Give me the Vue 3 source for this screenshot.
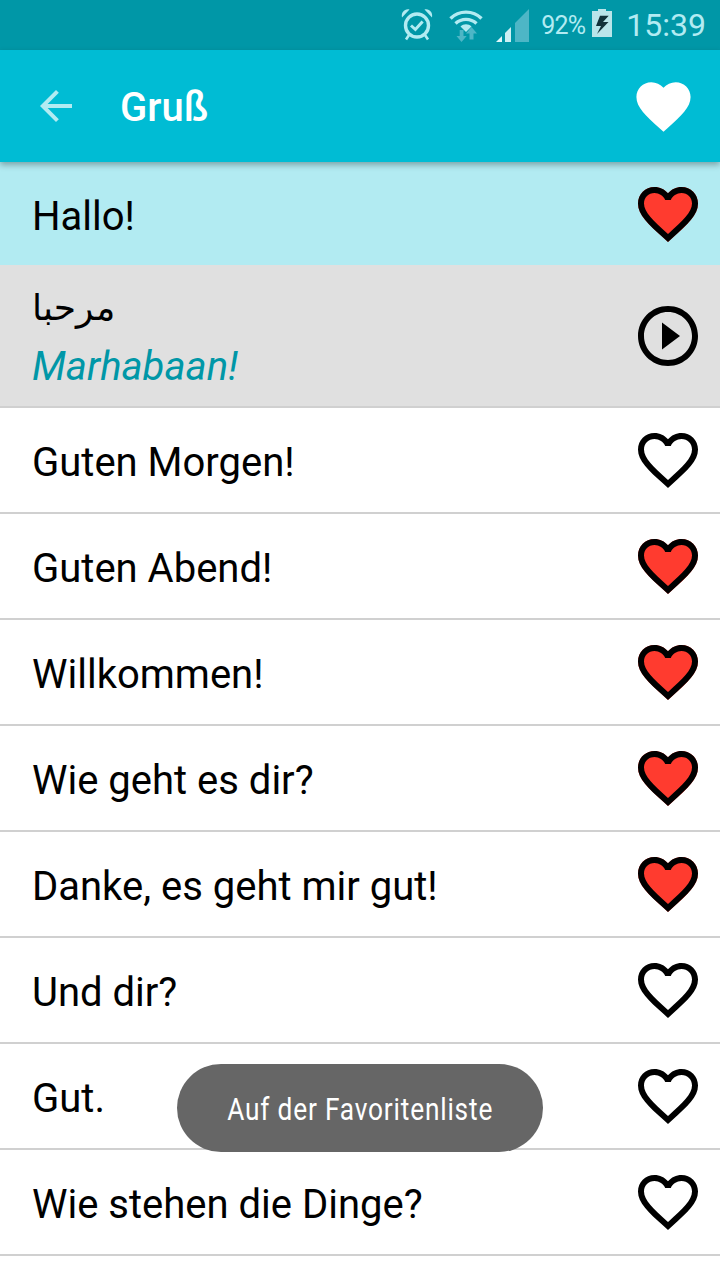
<template>
  <div class="screen">
    <div class="status-bar">
      <!-- alarm -->
      <svg class="st-alarm" width="32" height="34" viewBox="0 0 32 34">
        <circle cx="16" cy="17.500" r="11.500" fill="none" stroke="#b2ebf2" stroke-width="3.4" />
        <path d="M10 17.500l4.400 4 7.200-8" fill="none" stroke="#b2ebf2" stroke-width="3" />
        <path d="M1 9.500C0 4.500 3.500 .5 8.500 1.500z M31 9.500C32 4.500 28.500 .5 23.500 1.500z" fill="#b2ebf2" />
        <path d="M8 27l-3 4.500M24 27l3 4.500" stroke="#b2ebf2" stroke-width="2.6" />
      </svg>
      <!-- wifi -->
      <svg class="st-wifi" width="34" height="34" viewBox="0 0 34 34">
        <path d="M1.5 10.500C10 2 24 2 32.500 10.500" fill="none" stroke="#b2ebf2" stroke-width="3.4" />
        <path d="M6.500 15.500C12.500 10 21.500 10 27.500 15.500" fill="none" stroke="#b2ebf2" stroke-width="3.4" />
        <path d="M17 24l-5.500-5.500C14.500 15.500 19.500 15.500 22.500 18.500z" fill="#b2ebf2" />
        <path d="M12.500 34l-5-6h3.200v-6h3.800v6h3.200z" fill="#4db6c6" />
        <path d="M22.500 19l-5.500 6.500h3.500v6h4v-6h3.500z" fill="#4db6c6" />
      </svg>
      <!-- signal -->
      <svg class="st-signal" width="33" height="33" viewBox="0 0 33 33">
        <path d="M0 33L6 27V33z" fill="#e0f7fa" />
        <path d="M9 24L15 18V33H9z" fill="#cdeff4" />
        <path d="M19 14L33 0V33H19z" fill="#4db6c6" />
      </svg>
      <span class="st-percent">92%</span>
      <!-- battery -->
      <svg class="st-battery" width="20" height="28" viewBox="0 0 20 28">
        <path d="M6 0h8v2h6v26H0V2h6z" fill="#b9e5ea" />
        <path d="M8 6.700H16.700L11 13H16.500L5 25L9 17H4z" fill="#12323a" />
      </svg>
      <span class="st-time">15:39</span>
    </div>

    <header class="app-bar">
      <svg class="back" width="48" height="48" viewBox="0 0 24 24">
        <path d="M20 11H7.830l5.590-5.590L12 4l-8 8 8 8 1.410-1.410L7.830 13H20v-2z" />
      </svg>
      <h1 class="title">Gruß</h1>
      <svg class="fav" width="65" height="65" viewBox="0 0 24 24">
        <path :d="heartPath" />
      </svg>
    </header>

    <ul class="list">
      <li
        v-for="item in items"
        :key="item.text"
        class="row"
        :class="item.kind"
      >
        <div class="texts">
          <div class="text" :class="{ arabic: item.translit }">{{ item.text }}</div>
          <div v-if="item.translit" class="translit">{{ item.translit }}</div>
        </div>
        <svg class="icon" width="72" height="72" viewBox="0 0 24 24">
          <path v-if="item.translit" :d="playPath" />
          <template v-else>
            <path v-if="item.fav" :d="heartPath" fill="#ff3b2f" />
            <path :d="heartOutline" />
          </template>
        </svg>
      </li>
    </ul>

    <div class="toast">
      <span>Auf der Favoritenliste</span>
    </div>
  </div>
</template>

<script setup>
const heartPath =
  'M12 21.35l-1.45-1.32C5.4 15.36 2 12.28 2 8.5 2 5.42 4.42 3 7.5 3c1.74 0 3.34.81 4.5 2.09C13.16 3.81 14.76 3 16.5 3 19.58 3 22 5.42 22 8.5c0 3.78-3.4 6.86-8.55 11.54L12 21.35z'
const heartOutline =
  'M16.5 3c-1.74 0-3.41.81-4.5 2.09C10.91 3.81 9.24 3 7.5 3 4.42 3 2 5.42 2 8.5c0 3.78 3.4 6.86 8.55 11.54L12 21.35l1.45-1.32C18.6 15.36 22 12.28 22 8.5 22 5.42 19.58 3 16.5 3zm-4.4 15.55l-.1.1-.1-.1C7.14 14.24 4 11.39 4 8.5 4 6.5 5.5 5 7.5 5c1.54 0 3.04.99 3.57 2.36h1.87C13.46 5.99 14.96 5 16.5 5c2 0 3.5 1.5 3.5 3.5 0 2.89-3.14 5.74-7.9 10.05z'
const playPath =
  'M10 16.5l6-4.5-6-4.5v9zM12 2C6.48 2 2 6.48 2 12s4.48 10 10 10 10-4.48 10-10S17.52 2 12 2zm0 18c-4.41 0-8-3.59-8-8s3.59-8 8-8 8 3.59 8 8-3.59 8-8 8z'

const items = [
  { text: 'Hallo!', fav: true, kind: 'selected' },
  { text: 'مرحبا', translit: 'Marhabaan!', kind: 'expanded' },
  { text: 'Guten Morgen!', fav: false },
  { text: 'Guten Abend!', fav: true },
  { text: 'Willkommen!', fav: true },
  { text: 'Wie geht es dir?', fav: true },
  { text: 'Danke, es geht mir gut!', fav: true },
  { text: 'Und dir?', fav: false },
  { text: 'Gut.', fav: false },
  { text: 'Wie stehen die Dinge?', fav: false }
]
</script>

<style scoped>
.screen {
  position: relative;
  width: 720px;
  height: 1280px;
  overflow: hidden;
  background: #fff;
  font-family: Roboto, sans-serif;
}

.status-bar {
  display: flex;
  align-items: center;
  height: 50px;
  padding-right: 14px;
  justify-content: flex-end;
  background: #0097a7;
  color: #b2ebf2;
  box-sizing: border-box;
}

.status-bar svg {
  display: block;
  flex: none;
}

.st-alarm {
  margin-right: 16px;
}

.st-wifi {
  margin-right: 13px;
}

.st-signal {
  margin-right: 12px;
}

.st-percent {
  font-size: 25px;
  letter-spacing: -0.8px;
  margin-right: 7px;
}

.st-battery {
  margin-right: 14px;
  margin-bottom: 4px;
}

.st-time {
  font-size: 32px;
}

.app-bar {
  position: relative;
  z-index: 1;
  display: flex;
  align-items: center;
  height: 112px;
  background: #00bcd4;
  box-shadow: 0 3px 6px rgba(0, 0, 0, 0.3);
}

.back {
  margin-left: 32px;
  fill: #b2ebf2;
}

.title {
  flex: 1;
  margin: 0 0 0 40px;
  padding-top: 3px;
  color: #fff;
  font-size: 40px;
  font-weight: 500;
}

.fav {
  margin-right: 24px;
  fill: #fff;
}

.list {
  list-style: none;
  margin: 0;
  padding: 0;
}

.row {
  display: flex;
  align-items: center;
  justify-content: space-between;
  height: 106px;
  padding: 0 16px 0 32px;
  box-sizing: border-box;
  border-bottom: 2px solid #d0d0d0;
  color: #000;
}

.row.selected {
  height: 103px;
  background: #b2ebf2;
  border-bottom: none;
}

.row.expanded {
  height: 143px;
  background: #e0e0e0;
}

.text {
  font-size: 40px;
  line-height: 48px;
  padding-top: 6px;
}

.text.arabic {
  font-family: "DejaVu Sans", sans-serif;
  font-size: 36px;
  line-height: 56px;
  padding-top: 4px;
}

.translit {
  color: #0097a7;
  font-size: 40px;
  font-style: italic;
  line-height: 56px;
  padding-top: 3px;
}

.icon {
  display: block;
  flex: none;
}

.toast {
  position: absolute;
  left: 177px;
  top: 1064px;
  display: flex;
  align-items: center;
  justify-content: center;
  width: 366px;
  height: 88px;
  padding-top: 2px;
  box-sizing: border-box;
  border-radius: 44px;
  background: #666;
  color: #fff;
  font-size: 32px;
}

.toast span {
  display: block;
  letter-spacing: 1px;
  transform: scaleX(0.82);
  white-space: nowrap;
}
</style>
